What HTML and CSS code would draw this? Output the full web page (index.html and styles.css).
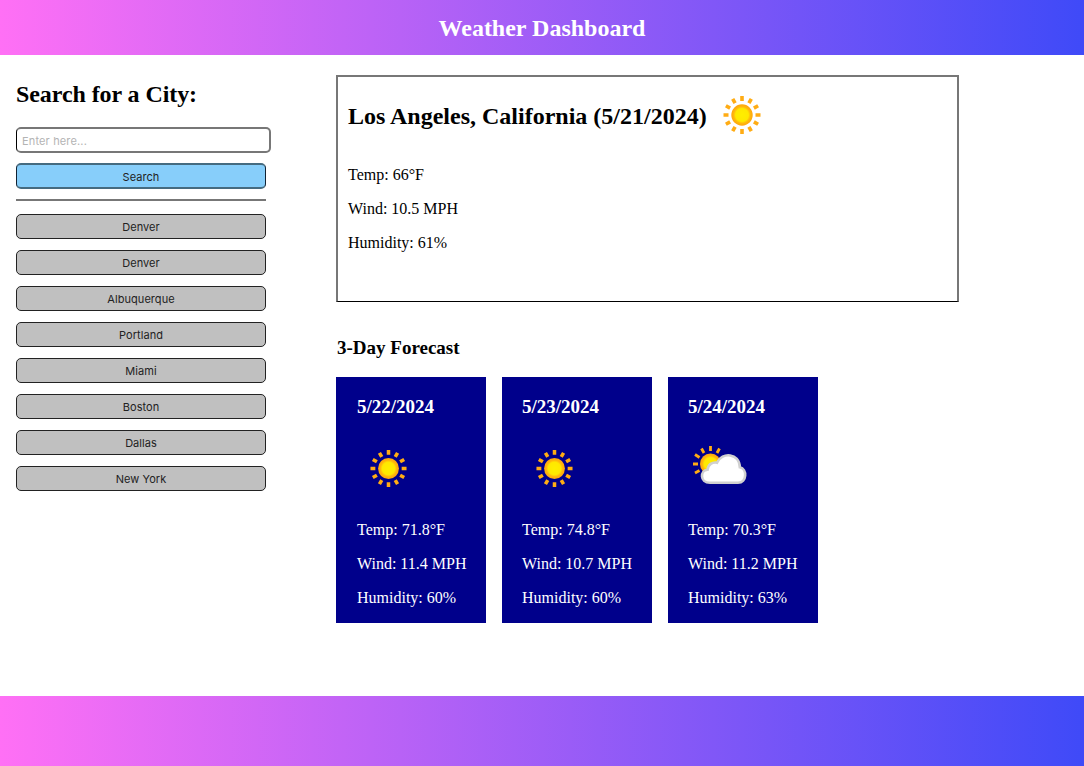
FILE: index.html
```html
<!DOCTYPE html>
<html lang="en">
<head>
<meta charset="utf-8">
<title>Weather Dashboard</title>
<link rel="stylesheet" href="styles.css">
</head>
<body>
<svg class="defs" width="0" height="0" aria-hidden="true">
  <defs>
    <radialGradient id="sunfill"><stop offset="0" stop-color="#ffee00"/><stop offset=".6" stop-color="#ffe800"/><stop offset=".78" stop-color="#ffb70c"/><stop offset="1" stop-color="#ffa60c"/></radialGradient>
    <symbol id="sun" viewBox="-20 -20 40 40">
      <g stroke="#ffac14" stroke-width="3.6">
        <path d="M0-19V-14M0 14V19M-18.5 0H-13.5M13.5 0H18.5"/>
        <path d="M9.3-16.1L6.9-11.9M-9.3-16.1L-6.9-11.9M9.3 16.1L6.9 11.9M-9.3 16.1L-6.9 11.9M16.1-9.3L11.9-6.9M-16.1-9.3L-11.9-6.9M16.1 9.3L11.9 6.9M-16.1 9.3L-11.9 6.9"/>
      </g>
      <circle r="10.7" fill="url(#sunfill)"/>
    </symbol>
    <symbol id="cloudy" viewBox="0 0 54 39">
      <g stroke="#ffac14" stroke-width="2.8">
        <path d="M17.500 0V5M0 18H5M26.500 2.500L24 7M8.500 2.500L11 7M2 8.500L6.500 11.500M2 27L6.500 24.500"/>
      </g>
      <circle cx="17.5" cy="18" r="10.5" fill="url(#sunfill)"/>
      <path d="M17 36.700C6.500 36.700 7 24.500 14.500 23.800C15 18.500 19.500 15.800 24 16.700C29 5.500 46.500 7 46.800 21.300C54.500 23 54 36.700 45 36.700Z" fill="#fff" stroke="#d0d0d0" stroke-width="2.600"/>
    </symbol>
  </defs>
</svg>
<header class="header"><h1 class="title">Weather Dashboard</h1></header>
<main class="main">
  <aside class="search">
    <h2 class="search-title">Search for a City:</h2>
    <input class="field" type="text" placeholder="Enter here...">
    <button class="btn btn-search">Search</button>
    <div class="rule"></div>
    <div class="history">
      <button class="btn">Denver</button>
      <button class="btn">Denver</button>
      <button class="btn">Albuquerque</button>
      <button class="btn">Portland</button>
      <button class="btn">Miami</button>
      <button class="btn">Boston</button>
      <button class="btn">Dallas</button>
      <button class="btn">New York</button>
    </div>
  </aside>
  <div class="content">
    <section class="today">
      <div class="today-head"><h2 class="city">Los Angeles, California (5/21/2024)</h2><svg class="icon-today"><use href="#sun"/></svg></div>
      <p class="stat">Temp: 66°F</p>
      <p class="stat">Wind: 10.5 MPH</p>
      <p class="stat">Humidity: 61%</p>
    </section>
    <h3 class="forecast-title">3-Day Forecast</h3>
    <section class="forecast">
      <article class="day day-first"><h3 class="date">5/22/2024</h3><div class="pic"><svg class="icon-sun"><use href="#sun"/></svg></div>
        <p class="stat">Temp: 71.8°F</p><p class="stat">Wind: 11.4 MPH</p><p class="stat">Humidity: 60%</p></article>
      <article class="day"><h3 class="date">5/23/2024</h3><div class="pic"><svg class="icon-sun"><use href="#sun"/></svg></div>
        <p class="stat">Temp: 74.8°F</p><p class="stat">Wind: 10.7 MPH</p><p class="stat">Humidity: 60%</p></article>
      <article class="day"><h3 class="date">5/24/2024</h3><div class="pic"><svg class="icon-cloudy"><use href="#cloudy"/></svg></div>
        <p class="stat">Temp: 70.3°F</p><p class="stat">Wind: 11.2 MPH</p><p class="stat">Humidity: 63%</p></article>
    </section>
  </div>
</main>
<footer class="footer"></footer>
</body>
</html>
```
FILE: styles.css
```css
* { box-sizing: border-box; }
body {
  margin: 0;
  height: 766px;
  display: flex;
  flex-direction: column;
  background: #fff;
  color: #000;
  font-family: "Liberation Serif", serif;
  font-size: 16px;
}
h1, h2, h3, p { margin: 0; white-space: nowrap; }
.defs { position: absolute; }
.header, .footer { flex: none; background: linear-gradient(90deg, #ff70f5, #3f4af8); }
.header { height: 55px; display: flex; justify-content: center; }
.title { color: #fff; font-size: 24px; line-height: 56px; }
.footer { height: 70px; }
.main { flex: 1; display: flex; }
.search { width: 336px; padding: 23px 0 0 16px; display: flex; flex-direction: column; }
.search-title { font-size: 24px; line-height: 32px; letter-spacing: -.08px; }
.field {
  width: 255px;
  height: 26px;
  margin-top: 17px;
  padding: 2px 5px 0;
  border: 2px solid #777;
  border-left: 1px solid #000;
  border-radius: 5px;
  font: 11px Inter, sans-serif;
  letter-spacing: .15px;
  outline: 0;
}
.field::placeholder { color: #b4b4b4; opacity: 1; }
.btn {
  display: block;
  width: 250px;
  height: 25px;
  padding: 1px 0 0;
  border: 1px solid #222;
  border-radius: 5px;
  background: #c0c0c0;
  color: #222;
  font: 11px Inter, sans-serif;
  letter-spacing: .05px;
}
.btn-search { height: 26px; margin-top: 10px; padding-top: 2px; border-width: 2px 1px; border-color: #456b80 #123; background: #87cefa; }
.rule { width: 250px; height: 2px; margin: 10px 0 13px; background: #777; }
.history { display: grid; gap: 11px; }
.content { padding-top: 20px; }
.today { width: 623px; height: 227px; padding: 16px 10px; border: 2px solid #777; border-bottom: 1px solid #000; }
.today-head { display: flex; align-items: center; height: 47px; margin-bottom: 18px; }
.city { font-size: 24px; }
.icon-today { width: 40px; height: 40px; margin: 0 0 3px 15px; }
.stat { height: 34px; line-height: 34px; }
.forecast-title { margin-top: 34px; padding-left: 1px; font-size: 19px; line-height: 24px; }
.forecast { display: flex; gap: 16px; margin-top: 17px; }
.day { width: 150px; height: 246px; padding: 18px 0 0 20px; background: #00008b; color: #fff; }
.day-first { padding-left: 21px; }
.date { font-size: 19px; line-height: 24px; }
.pic { height: 94px; padding-top: 30px; }
.icon-sun { width: 39px; height: 39px; margin-left: 13px; }
.day-first .icon-sun { margin-left: 12px; }
.icon-cloudy { display: block; width: 54px; height: 39px; margin: -3px 0 0 5px; }
```
